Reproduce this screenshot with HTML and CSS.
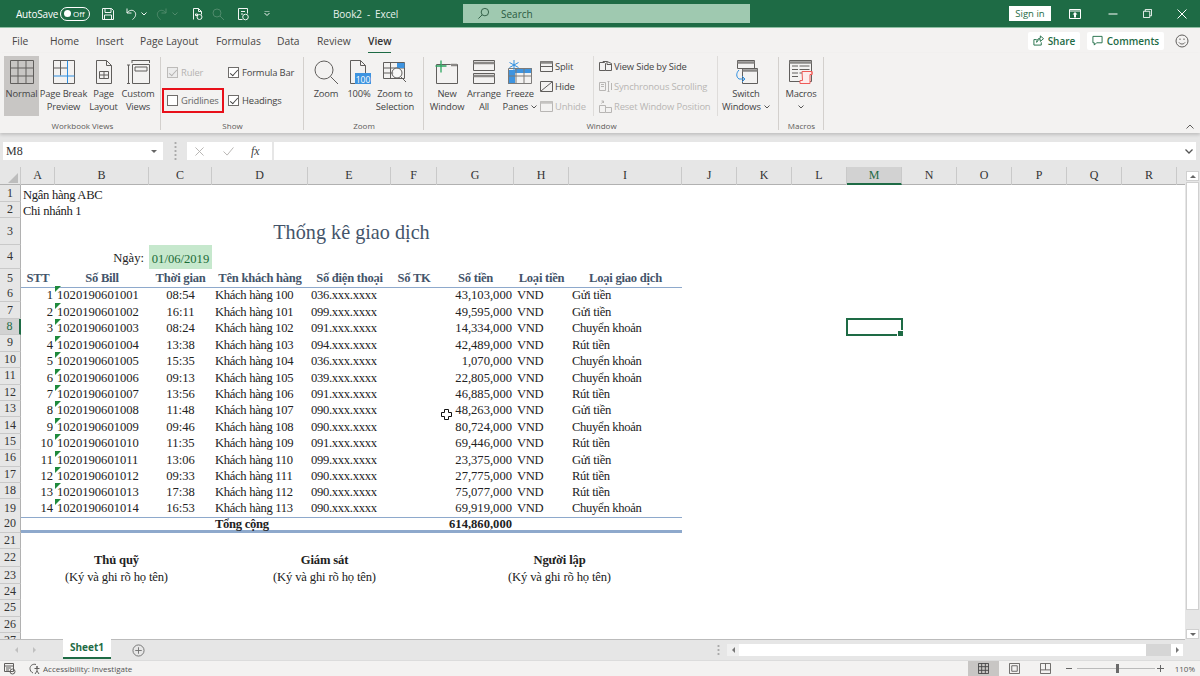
FILE: index.html
```html
<!DOCTYPE html>
<html lang="vi">
<head>
<meta charset="utf-8">
<title>Book2 - Excel</title>
<link rel="stylesheet" href="styles.css">
</head>
<body>
<div class="app">
  <header class="titlebar">
    <div class="qat">
      <span class="as-label">AutoSave</span>
      <span class="toggle"><i class="knob"></i><span class="off">Off</span></span>
      <svg class="q q-save" viewBox="0 0 14 14"><path d="M1.5 1.5h9l2 2v9h-11z M4 1.5v4h6v-4 M3.5 12.5v-4.5h7v4.5"/></svg>
      <svg class="q q-undo" viewBox="0 0 14 14"><path d="M3 1.5v4.5h4.5 M3 6c2-3 5.500-3.500 7.500-1.500s1.500 5.500-2 8"/></svg>
      <svg class="car" viewBox="0 0 6 4"><path d="M.5.5l2.500 2.500 2.500-2.500"/></svg>
      <svg class="q q-redo" viewBox="0 0 14 14"><path d="M11 1.500v4.500h-4.500 M11 6c-2-3-5.500-3.500-7.500-1.500s-1.500 5.500 2 8"/></svg>
      <svg class="car dim" viewBox="0 0 6 4"><path d="M.5.5l2.500 2.500 2.500-2.500"/></svg>
      <svg class="q q-print" viewBox="0 0 14 14"><path d="M2.500 12.500v-11h5l3 3v3 M7.500 1.500v3h3"/><circle cx="8.500" cy="10" r="2.500"/><path d="M4.500 7h2v1.500h-2z"/></svg>
      <svg class="q q-find" viewBox="0 0 14 14"><circle cx="6" cy="6" r="4"/><path d="M9 9l4 4"/></svg>
      <svg class="q q-form" viewBox="0 0 14 14"><path d="M2.500 1.500h9v5 M2.500 1.500v11h4 M5 4.500h4 M5 7h2"/><circle cx="9.500" cy="10" r="2.800"/></svg>
      <svg class="car q-more" viewBox="0 0 6 5"><path d="M.5 0h5 M.5 2l2.500 2.500 2.500-2.500"/></svg>
    </div>
    <div class="doc-title">Book2 &nbsp;- &nbsp;Excel</div>
    <div class="search">
      <svg class="s-ic" viewBox="0 0 14 14"><circle cx="8.500" cy="5.500" r="4"/><path d="M5.500 8.500l-4 4"/></svg>
      <span>Search</span>
    </div>
    <div class="winbtns">
      <span class="signin">Sign in</span>
      <svg class="w-disp" viewBox="0 0 12 10"><path d="M.5.500h11v9h-11z M.5 2h11" /><path class="solid" d="M6 3l2.500 2.500h-1.500v3h-2v-3h-1.500z"/></svg>
      <svg class="w-min" viewBox="0 0 10 10"><path d="M.5 5h9"/></svg>
      <svg class="w-max" viewBox="0 0 10 10"><path d="M.5 2.500h7v7h-7z M2.500 2.500v-2h7v7h-2"/></svg>
      <svg class="w-close" viewBox="0 0 10 10"><path d="M.5.500l9 9 M9.500.500l-9 9"/></svg>
    </div>
  </header>

  <nav class="tabs">
    <span class="tab">File</span><span class="tab">Home</span><span class="tab">Insert</span><span class="tab">Page Layout</span><span class="tab">Formulas</span><span class="tab">Data</span><span class="tab">Review</span><span class="tab active">View</span>
    <div class="tab-right">
      <span class="pill pill-share"><svg class="pill-ic" viewBox="0 0 12 12"><path d="M1 5h3 M1 5v6h8v-3 M4 8c0-3 2-4.500 4-4.500v-2.500l3.500 3-3.500 3v-2c-1.500 0-3 .5-4 3z"/></svg>Share</span>
      <span class="pill pill-comm"><svg class="pill-ic" viewBox="0 0 12 12"><path d="M1 1.500h10v7h-6l-2.500 2.500v-2.500h-1.500z"/></svg>Comments</span>
      <svg class="smile" viewBox="0 0 14 14"><circle cx="7" cy="7" r="6"/><path d="M4 8.500c1.500 2 4.500 2 6 0"/><path class="solid" d="M4.500 4.500h1v1.500h-1z M8.500 4.500h1v1.500h-1z"/></svg>
    </div>
  </nav>

  <section class="ribbon">
    <div class="group g-views">
      <div class="g-body">
        <div class="tb w-normal selected">
          <svg class="ic" viewBox="0 0 24 24"><path d="M.5.500h23v23h-23z M8 .5v23 M16 .5v23 M.5 8h23 M.5 16h23"/></svg>
          <span class="tl">Normal</span>
        </div>
        <div class="tb w-break">
          <svg class="ic" viewBox="0 0 24 24"><path d="M1.500.500h21v23h-21z M1.500 8h14 M8.500.5v15"/><path class="blue" d="M15.500.5v23 M1.500 16h21"/></svg>
          <span class="tl">Page Break<br>Preview</span>
        </div>
        <div class="tb w-layout">
          <svg class="ic" viewBox="0 0 24 24"><path d="M4.500.500h10l5 5v18h-15z M14.500.5v5h5 M7.500 11.500h9v7h-9z M7.500 15h9 M12 11.500v7"/></svg>
          <span class="tl">Page<br>Layout</span>
        </div>
        <div class="tb w-custom">
          <svg class="ic" viewBox="0 0 24 24"><path d="M6.500 4.500h17v19h-17z M9 7h12v4h-12z M6 .5h18 M6 0v3 M23.500 0v3 M1 5h3 M2.500 5v18 M1 23.500h3"/></svg>
          <span class="tl">Custom<br>Views</span>
        </div>
      </div>
      <div class="g-label">Workbook Views</div>
    </div>

    <div class="group g-show">
      <div class="g-body show-grid">
        <label class="chk dis"><span class="box on"></span>Ruler</label>
        <label class="chk"><span class="box on"></span>Formula Bar</label>
        <label class="chk outlined"><span class="box"></span>Gridlines</label>
        <label class="chk"><span class="box on"></span>Headings</label>
      </div>
      <div class="g-label">Show</div>
    </div>

    <div class="group g-zoom">
      <div class="g-body">
        <div class="tb w-zoom">
          <svg class="ic" viewBox="0 0 24 24"><circle cx="10" cy="10" r="9"/><path d="M16.500 16.500l7.500 7.500"/></svg>
          <span class="tl">Zoom</span>
        </div>
        <div class="tb w-100">
          <svg class="ic" viewBox="0 0 24 24"><path d="M3.500.500h10l5 5v18h-15z M13.500.5v5h5"/><path class="bluefill" d="M8 13h16v11h-16z"/><text class="t100" x="16" y="22.500">100</text></svg>
          <span class="tl">100%</span>
        </div>
        <div class="tb w-zsel">
          <svg class="ic" viewBox="0 0 24 24"><path d="M.5 2.500h21v16h-21z M.5 8h21 M.5 13h10 M7.500 2.500v16 M14.500 2.500v6"/><path class="bluefill" d="M14 3h7.500v5h-7.500z"/><circle class="lens" cx="14" cy="13" r="5"/><path d="M18 17l5 5"/></svg>
          <span class="tl">Zoom to<br>Selection</span>
        </div>
      </div>
      <div class="g-label">Zoom</div>
    </div>

    <div class="group g-window">
      <div class="g-body">
        <div class="tb w-new">
          <svg class="ic" viewBox="0 0 24 24"><path d="M6.500 4.500h-5v19h21v-19h-7z"/><path class="thick" d="M16 5h6"/><path class="green" d="M6 .5v12 M.5 6h11"/></svg>
          <span class="tl">New<br>Window</span>
        </div>
        <div class="tb w-arr">
          <svg class="ic" viewBox="0 0 24 24"><path d="M1.500.500h21v10h-21z M1.500 13.500h21v10h-21z"/><path class="thick" d="M1.500 3h21 M1.500 16h21"/></svg>
          <span class="tl">Arrange<br>All</span>
        </div>
        <div class="tb w-freeze">
          <svg class="ic" viewBox="0 0 24 24"><path class="bluefill" d="M0 10h7v14h-7z M7 8h17v5h-17z"/><path class="grid" d="M.5 8.500h23v15h-23z M.5 16h23 M8 8.500v15 M16 8.500v15"/><path class="blue" d="M6 0v10 M1.500 2.500l9 5 M10.500 2.500l-9 5"/></svg>
          <span class="tl">Freeze<br>Panes <svg class="car dark" viewBox="0 0 6 4"><path d="M.5.5l2.500 2.500 2.500-2.500"/></svg></span>
        </div>
        <div class="stack st-a">
          <div class="si"><svg class="sm" viewBox="0 0 13 13"><path d="M.5 1.500h12v10h-12z M.5 6.500h12"/><path class="thick" d="M.5 2.500h12"/></svg>Split</div>
          <div class="si"><svg class="sm" viewBox="0 0 13 13"><path d="M.5 1.500h12v10h-12z M1 11l11-9"/></svg>Hide</div>
          <div class="si dis"><svg class="sm" viewBox="0 0 13 13"><path d="M.5 1.500h12v10h-12z"/><path class="thick" d="M.5 2.500h12"/></svg>Unhide</div>
        </div>
        <div class="stack st-b">
          <div class="si"><svg class="sm" viewBox="0 0 13 13"><path d="M.5 2.500h5l1 1v7h-6z M4 2.500v-1h4l4.500 2v7h-6 M8 1.500v3h4.500"/></svg>View Side by Side</div>
          <div class="si dis"><svg class="sm" viewBox="0 0 13 13"><path d="M.5 2.500h6v8h-6z M2 4.500h3 M2 6.500h3 M8.500 1.500h2 M9.500 1.500v10 M8.500 11.500h2 M12.500 3v7"/></svg>Synchronous Scrolling</div>
          <div class="si dis"><svg class="sm" viewBox="0 0 13 13"><path d="M.5 5.500h6v7h-6z M6.500 7.500h6v5h-6 M2.500 3.500l2-2.500 M2.500 1h2v2"/></svg>Reset Window Position</div>
        </div>
        <div class="tb w-switch">
          <svg class="ic" viewBox="0 0 24 24"><path d="M3.500.500h17v8h-17z M8.500 8.500h15v15h-15z"/><path class="thick" d="M3.500 2.500h17 M8.500 10.500h15"/><path class="blue" d="M5 10c-3 3-3 7 0 9h6 M8 16l3 3-3 3"/></svg>
          <span class="tl">Switch<br>Windows <svg class="car dark" viewBox="0 0 6 4"><path d="M.5.5l2.500 2.500 2.500-2.500"/></svg></span>
        </div>
      </div>
      <div class="g-label">Window</div>
    </div>

    <div class="group g-macros">
      <div class="g-body">
        <div class="tb w-macros">
          <svg class="ic" viewBox="0 0 24 24"><path d="M.5.500h22v21h-22z M3 6h6 M3 9.500h6 M3 13h6 M3 16.500h6 M10.500 6h10 M10.500 9.500h10 M10.500 13h4"/><path class="thick" d="M.5 2.500h22"/><path class="red" d="M13 11.500h10v3h-2v9h-10v-3h2.500z M23 11.500v3"/></svg>
          <span class="tl">Macros<br><svg class="car dark" viewBox="0 0 6 4"><path d="M.5.5l2.500 2.500 2.500-2.500"/></svg></span>
        </div>
      </div>
      <div class="g-label">Macros</div>
    </div>

    <svg class="collapse" viewBox="0 0 8 5"><path d="M.5 4.500l3.500-3.500 3.500 3.500"/></svg>
  </section>

  <section class="formula">
    <div class="namebox"><span>M8</span><i class="tri-d"></i></div>
    <div class="f-dots"></div>
    <div class="f-btns">
      <svg class="f-x" viewBox="0 0 10 10"><path d="M.5.500l9 9 M9.500.500l-9 9"/></svg>
      <svg class="f-c" viewBox="0 0 12 10"><path d="M.5 5l4 4 7-8.500"/></svg>
      <span class="fx">fx</span>
    </div>
    <div class="f-input"><svg class="f-car" viewBox="0 0 8 5"><path d="M.5.500l3.500 3.500 3.500-3.500"/></svg></div>
  </section>

  <section class="workspace">
    <div class="sheet">
      <div class="colhead">
        <span class="corner"></span><span>A</span><span>B</span><span>C</span><span>D</span><span>E</span><span>F</span><span>G</span><span>H</span><span>I</span><span>J</span><span>K</span><span>L</span><span class="cur">M</span><span>N</span><span>O</span><span>P</span><span>Q</span><span>R</span>
      </div>

      <div class="r h17"><b class="rh">1</b><span class="c s-over">Ngân hàng ABC</span></div>
      <div class="r h16"><b class="rh">2</b><span class="c s-over">Chi nhánh 1</span></div>
      <div class="r h27"><b class="rh">3</b><span class="c title">Thống kê giao dịch</span></div>
      <div class="r h24"><b class="rh">4</b><span class="c s-ngay">Ngày:</span><span class="c date">01/06/2019</span></div>
      <div class="r h17 line"><b class="rh">5</b><span class="c th">STT</span><span class="c th">Số Bill</span><span class="c th">Thời gian</span><span class="c th">Tên khách hàng</span><span class="c th">Số điện thoại</span><span class="c th">Số TK</span><span class="c th">Số tiền</span><span class="c th">Loại tiền</span><span class="c th">Loại giao dịch</span></div>

      <div class="r"><b class="rh">6</b><span class="c n">1</span><span class="c bill">1020190601001</span><span class="c m">08:54</span><span class="c l">Khách hàng 100</span><span class="c l">036.xxx.xxxx</span><span class="c"></span><span class="c n">43,103,000</span><span class="c l">VND</span><span class="c l">Gửi tiền</span></div>
      <div class="r"><b class="rh">7</b><span class="c n">2</span><span class="c bill">1020190601002</span><span class="c m">16:11</span><span class="c l">Khách hàng 101</span><span class="c l">099.xxx.xxxx</span><span class="c"></span><span class="c n">49,595,000</span><span class="c l">VND</span><span class="c l">Gửi tiền</span></div>
      <div class="r"><b class="rh cur">8</b><span class="c n">3</span><span class="c bill">1020190601003</span><span class="c m">08:24</span><span class="c l">Khách hàng 102</span><span class="c l">091.xxx.xxxx</span><span class="c"></span><span class="c n">14,334,000</span><span class="c l">VND</span><span class="c l">Chuyển khoản</span></div>
      <div class="r"><b class="rh">9</b><span class="c n">4</span><span class="c bill">1020190601004</span><span class="c m">13:38</span><span class="c l">Khách hàng 103</span><span class="c l">094.xxx.xxxx</span><span class="c"></span><span class="c n">42,489,000</span><span class="c l">VND</span><span class="c l">Rút tiền</span></div>
      <div class="r"><b class="rh">10</b><span class="c n">5</span><span class="c bill">1020190601005</span><span class="c m">15:35</span><span class="c l">Khách hàng 104</span><span class="c l">036.xxx.xxxx</span><span class="c"></span><span class="c n">1,070,000</span><span class="c l">VND</span><span class="c l">Chuyển khoản</span></div>
      <div class="r"><b class="rh">11</b><span class="c n">6</span><span class="c bill">1020190601006</span><span class="c m">09:13</span><span class="c l">Khách hàng 105</span><span class="c l">039.xxx.xxxx</span><span class="c"></span><span class="c n">22,805,000</span><span class="c l">VND</span><span class="c l">Chuyển khoản</span></div>
      <div class="r"><b class="rh">12</b><span class="c n">7</span><span class="c bill">1020190601007</span><span class="c m">13:56</span><span class="c l">Khách hàng 106</span><span class="c l">091.xxx.xxxx</span><span class="c"></span><span class="c n">46,885,000</span><span class="c l">VND</span><span class="c l">Rút tiền</span></div>
      <div class="r"><b class="rh">13</b><span class="c n">8</span><span class="c bill">1020190601008</span><span class="c m">11:48</span><span class="c l">Khách hàng 107</span><span class="c l">090.xxx.xxxx</span><span class="c"></span><span class="c n">48,263,000</span><span class="c l">VND</span><span class="c l">Gửi tiền</span></div>
      <div class="r"><b class="rh">14</b><span class="c n">9</span><span class="c bill">1020190601009</span><span class="c m">09:46</span><span class="c l">Khách hàng 108</span><span class="c l">090.xxx.xxxx</span><span class="c"></span><span class="c n">80,724,000</span><span class="c l">VND</span><span class="c l">Chuyển khoản</span></div>
      <div class="r"><b class="rh">15</b><span class="c n">10</span><span class="c bill">1020190601010</span><span class="c m">11:35</span><span class="c l">Khách hàng 109</span><span class="c l">091.xxx.xxxx</span><span class="c"></span><span class="c n">69,446,000</span><span class="c l">VND</span><span class="c l">Rút tiền</span></div>
      <div class="r"><b class="rh">16</b><span class="c n">11</span><span class="c bill">1020190601011</span><span class="c m">13:06</span><span class="c l">Khách hàng 110</span><span class="c l">099.xxx.xxxx</span><span class="c"></span><span class="c n">23,375,000</span><span class="c l">VND</span><span class="c l">Gửi tiền</span></div>
      <div class="r"><b class="rh">17</b><span class="c n">12</span><span class="c bill">1020190601012</span><span class="c m">09:33</span><span class="c l">Khách hàng 111</span><span class="c l">090.xxx.xxxx</span><span class="c"></span><span class="c n">27,775,000</span><span class="c l">VND</span><span class="c l">Rút tiền</span></div>
      <div class="r"><b class="rh">18</b><span class="c n">13</span><span class="c bill">1020190601013</span><span class="c m">17:38</span><span class="c l">Khách hàng 112</span><span class="c l">090.xxx.xxxx</span><span class="c"></span><span class="c n">75,077,000</span><span class="c l">VND</span><span class="c l">Rút tiền</span></div>
      <div class="r line"><b class="rh">19</b><span class="c n">14</span><span class="c bill">1020190601014</span><span class="c m">16:53</span><span class="c l">Khách hàng 113</span><span class="c l">090.xxx.xxxx</span><span class="c"></span><span class="c n">69,919,000</span><span class="c l">VND</span><span class="c l">Chuyển khoản</span></div>

      <div class="r h17 total"><b class="rh">20</b><span class="c"></span><span class="c"></span><span class="c"></span><span class="c l strong">Tổng cộng</span><span class="c"></span><span class="c"></span><span class="c n strong">614,860,000</span><span class="c"></span><span class="c"></span></div>
      <div class="r"><b class="rh">21</b></div>
      <div class="r sig22"><b class="rh">22</b><span class="c sig-a strong">Thủ quỹ</span><span class="c sig-b strong">Giám sát</span><span class="c sig-c strong">Người lập</span></div>
      <div class="r"><b class="rh">23</b><span class="c sig-a">(Ký và ghi rõ họ tên)</span><span class="c sig-b">(Ký và ghi rõ họ tên)</span><span class="c sig-c">(Ký và ghi rõ họ tên)</span></div>
      <div class="r"><b class="rh">24</b></div>
      <div class="r"><b class="rh">25</b></div>
      <div class="r"><b class="rh">26</b></div>
      <div class="r"><b class="rh">27</b></div>

      <div class="selection"></div>
      <svg class="cursor" viewBox="0 0 11 11"><path d="M3.500.500h4v3h3v4h-3v3h-4v-3h-3v-4h3z"/></svg>
    </div>
    <div class="vscroll">
      <span class="sb-btn"><i class="tri-u"></i></span>
      <span class="sb-thumb"></span>
      <span class="sb-btn"><i class="tri-d"></i></span>
    </div>
  </section>

  <section class="sheetbar">
    <i class="nav nav-l"></i><i class="nav nav-r"></i>
    <span class="sheet-tab">Sheet1</span>
    <svg class="add" viewBox="0 0 14 14"><circle cx="7" cy="7" r="6"/><path d="M7 3.500v7 M3.500 7h7"/></svg>
    <div class="hdots"></div>
    <div class="hscroll">
      <span class="hs-btn"><i class="tri-l"></i></span>
      <span class="hs-thumb"></span>
      <span class="hs-btn"><i class="tri-r"></i></span>
    </div>
  </section>

  <footer class="status">
    <svg class="st-macro" viewBox="0 0 12 12"><path d="M.5.500h9v8h-9z M.5 3h9 M2 5h5 M2 7h3"/><circle cx="8.500" cy="8.500" r="2.500"/></svg>
    <svg class="st-acc" viewBox="0 0 12 12"><path d="M7 1.500c-3-1-6 1-6 4 0 2 1 3.500 3 4.500"/><circle class="solid" cx="8" cy="4" r="1"/><path d="M5.500 5.500h5 M8 5.500v2.500l-2 3 M8 8l2 3"/></svg>
    <span class="st-text">Accessibility: Investigate</span>
    <div class="st-right">
      <span class="vw vw-on"><svg viewBox="0 0 12 12"><path d="M.5.500h11v11h-11z M4 .5v11 M8 .5v11 M.5 4h11 M.5 8h11"/></svg></span>
      <span class="vw"><svg viewBox="0 0 12 12"><path d="M.5.500h11v11h-11z M3 3h6v6h-6z"/></svg></span>
      <span class="vw"><svg viewBox="0 0 12 12"><path d="M.5.500h11v11h-11z M.5 7.500h11 M6 .5v7"/></svg></span>
      <span class="z-minus"></span>
      <span class="slider"><i class="z-thumb"></i></span>
      <span class="z-plus"></span>
      <span class="z-val">110%</span>
    </div>
  </footer>
</div>
</body>
</html>
```

FILE: styles.css
```css
* { box-sizing: border-box; }
html, body { margin: 0; padding: 0; }
body { width: 1200px; height: 676px; overflow: hidden; background: #e6e6e6; font-family: "Open Sans", "Noto Sans", sans-serif; color: #444; }
svg { display: block; fill: none; stroke: #605e5c; stroke-width: 1; flex: none; }
svg .solid { fill: currentColor; stroke: none; }
.app { display: flex; flex-direction: column; width: 1200px; height: 676px; }

/* title bar */
.titlebar { height: 28px; flex: none; display: flex; align-items: center; background: #1e6b45; color: #fff; font-size: 10px; border-bottom: 1px solid #8fbfa3; }
.qat { width: 333px; flex: none; display: flex; align-items: center; padding-left: 16px; }
.qat svg { stroke: #f0f5f2; }
.as-label { width: 44px; font-size: 10px; white-space: nowrap; letter-spacing: -.2px; }
.toggle { width: 30px; height: 14px; border: 1px solid #fff; border-radius: 7px; display: flex; align-items: center; padding-left: 3px; gap: 2px; font-size: 8px; }
.knob { width: 7px; height: 7px; border-radius: 50%; background: #fff; }
.off { font-size: 8px; line-height: 1; }
.q { width: 14px; height: 14px; }
.q-save { margin-left: 11px; }
.q-undo { margin-left: 9px; }
.car { width: 6px; height: 4px; margin-left: 3px; display: inline-block; }
.car.dim, .qat .car.dim { stroke: #4f8a6b; }
.q-redo { margin-left: 8px; }
.qat .q-redo, .qat .q-find { stroke: #4f8a6b; }
.q-print { margin-left: 13px; }
.q-find { margin-left: 6px; }
.q-form { margin-left: 11px; }
.q-more { margin-left: 14px; height: 5px; }
.doc-title { width: 130px; flex: none; font-size: 10px; color: #e8f1ec; white-space: nowrap; letter-spacing: -.1px; }
.search { width: 287px; height: 19px; flex: none; background: #9fc9b0; color: #2b5a41; display: flex; align-items: center; padding-left: 14px; gap: 11px; font-size: 10px; }
.s-ic { width: 13px; height: 13px; stroke: #2b5a41; }
.winbtns { flex: 1; display: flex; align-items: center; padding-left: 259px; }
.signin { width: 42px; height: 15px; background: #fff; color: #1e6b45; font-size: 9.500px; line-height: 15px; text-align: center; white-space: nowrap; }
.winbtns svg { stroke: #fff; }
.w-disp { width: 12px; height: 10px; margin-left: 18px; color: #fff; }
.w-min { width: 10px; height: 10px; margin-left: 27px; }
.w-max { width: 9px; height: 9px; margin-left: 25px; }
.w-close { width: 10px; height: 10px; margin-left: 25px; }

/* tabs */
.tabs { height: 25px; flex: none; display: grid; grid-template-columns: 12px 38px 46px 44px 76px 61px 40px 51px 51px 1fr; background: #f3f2f1; font-size: 10.300px; align-items: center; }
.tab { white-space: nowrap; color: #484644; }
.tab:first-child { grid-column: 2; }
.active { grid-column: 9; position: relative; font-weight: 600; color: #333; }
.active::after { content: ""; position: absolute; left: 0; width: 23px; bottom: -6px; height: 2px; background: #1e6b45; }
.tab-right { grid-column: 10; grid-row: 1; display: flex; align-items: center; gap: 7px; justify-content: flex-end; padding-right: 11px; }
.pill { height: 18px; background: #fff; color: #1e6b45; font-weight: 600; font-size: 10px; display: flex; align-items: center; justify-content: center; gap: 4px; white-space: nowrap; border-radius: 2px; }
.pill-share { width: 52px; }
.pill-comm { width: 77px; }
.pill-ic { width: 11px; height: 11px; stroke: #1e6b45; }
.smile { width: 14px; height: 14px; margin-left: 4px; color: #605e5c; }

/* ribbon */
.ribbon { height: 80px; flex: none; display: flex; position: relative; background: #f3f2f1; padding-top: 3px; box-shadow: 0 2px 3px rgba(0,0,0,.16); z-index: 2; }
.group { display: flex; flex-direction: column; height: 77px; position: relative; }
.group::after { content: ""; position: absolute; right: 0; top: 1px; bottom: 3px; width: 1px; background: #d3d0cd; }
.g-body { height: 63px; display: flex; flex: none; }
.g-label { height: 14px; flex: none; line-height: 14px; text-align: center; font-size: 8px; color: #5c5a58; white-space: nowrap; }
.g-views { width: 161px; padding-left: 4px; }
.g-show { width: 143px; }
.g-zoom { width: 120px; }
.g-window { width: 355px; }
.g-macros { width: 45px; }
.tb { display: flex; flex-direction: column; align-items: center; height: 60px; padding-top: 4px; flex: none; }
.tb .ic { width: 24px; height: 24px; }
.tl { display: block; margin-top: 3px; font-size: 9.400px; line-height: 13px; text-align: center; white-space: nowrap; color: #444; letter-spacing: -.15px; }
.selected { background: #c8c6c4; }
.w-normal { width: 35px; }
.w-break { width: 49px; }
.w-layout { width: 31px; margin-left: 0; }
.w-custom { width: 36px; margin-left: 1px; }
.w-zoom { width: 34px; margin-left: 5px; }
.w-100 { width: 32px; }
.w-zsel { width: 40px; }
.w-new { width: 40px; margin-left: 3px; }
.w-arr { width: 34px; }
.w-freeze { width: 38px; }
.w-switch { width: 50px; margin-left: 3px; }
.w-macros { width: 44px; }
.car.dark { stroke: #555; margin-left: 1px; vertical-align: 1px; }
.blue { stroke: #2f8fe0; }
.bluefill { fill: #3e94e0; stroke: none; }
.green { stroke: #2ba560; stroke-width: 1.300; }
.red { stroke: #ee5a57; fill: #fdecec; }
.grid { stroke: #7d7b79; }
.thick { stroke: #8a8886; stroke-width: 2.500; }
.lens { fill: rgba(255,255,255,.6); }
.t100 { font-family: "Open Sans", sans-serif; font-size: 8.500px; fill: #fff; stroke: none; text-anchor: middle; }

.show-grid { display: grid; grid-template-columns: 64px 1fr; grid-template-rows: 28px 24px; padding: 5px 0 0 2px; align-content: start; }
.chk { display: flex; align-items: center; gap: 3px; font-size: 9.400px; white-space: nowrap; height: 23px; padding-left: 4px; color: #444; letter-spacing: -.15px; }
.box { width: 11px; height: 11px; border: 1px solid #6f6d6b; background: #fff; position: relative; flex: none; }
.box.on::after { content: ""; position: absolute; left: 3px; top: 0; width: 3px; height: 7px; border: solid #444; border-width: 0 1px 1px 0; transform: rotate(42deg); }
.chk.dis { color: #b5b3b1; }
.chk.dis .box { border-color: #bdbbb9; background: #ececec; }
.chk.dis .box.on::after { border-color: #b5b3b1; }
.outlined { outline: 2px solid #e8101a; outline-offset: -1px; width: 60px; color: #666; }
.show-grid .chk:nth-child(2) { padding-left: 1px; }
.show-grid .chk:nth-child(4) { padding-left: 1px; }

.stack { display: flex; flex-direction: column; padding-top: 1px; flex: none; }
.si { height: 20px; display: flex; align-items: center; gap: 2px; font-size: 9.400px; white-space: nowrap; color: #444; letter-spacing: -.15px; }
.sm { width: 13px; height: 13px; }
.si.dis { color: #b8b6b4; }
.si.dis svg { stroke: #b8b6b4; }
.si.dis .thick { stroke: #c5c3c1; }
.st-a { width: 54px; margin-left: 1px; border-right: 1px solid #dedcda; height: 60px; }
.st-b { width: 124px; padding-left: 5px; border-right: 1px solid #dedcda; height: 60px; }
.collapse { position: absolute; right: 6px; bottom: 4px; width: 8px; height: 5px; stroke: #605e5c; }

/* formula */
.formula { height: 34px; flex: none; display: flex; align-items: flex-end; padding: 0 4px 7px 3px; background: #e6e6e6; font-family: "Liberation Serif", serif; }
.namebox { width: 160px; height: 18px; background: #fff; display: flex; align-items: center; justify-content: space-between; padding: 0 6px 0 3px; font-size: 12px; color: #333; }
.tri-d { width: 0; height: 0; border: 3px solid transparent; border-top: 3px solid #666; border-bottom-width: 0; }
.f-dots { width: 24px; height: 18px; flex: none; background: radial-gradient(circle, #aaa 1px, transparent 1.200px) center / 3px 4px repeat-y; }
.f-btns { width: 85px; height: 18px; background: #fff; display: flex; align-items: center; padding-left: 8px; flex: none; }
.f-x { width: 9px; height: 9px; stroke: #b1afad; }
.f-c { width: 11px; height: 9px; stroke: #b1afad; margin-left: 19px; }
.fx { margin-left: 17px; font-style: italic; font-size: 12px; color: #444; }
.f-input { flex: 1; height: 18px; margin-left: 2px; background: #fff; position: relative; display: flex; align-items: center; justify-content: flex-end; padding-right: 3px; }
.f-car { width: 8px; height: 5px; stroke: #555; stroke-width: 1.300; }

/* sheet */
.workspace { height: 473px; flex: none; display: flex; background: #fff; }
.sheet { width: 1185px; position: relative; overflow: hidden; background: #fff; font-family: "Liberation Serif", serif; font-size: 12.600px; color: #222; border-bottom: 1px solid #bbb; }
.colhead { display: grid; grid-template-columns: 21px 34px 94px 63px 96px 83px 46px 77px 55px 113px repeat(9, 55px); height: 18px; background: #e6e6e6; border-bottom: 1px solid #b1b1b1; }
.colhead span { display: block; text-align: center; line-height: 17px; font-size: 12px; color: #333; border-right: 1px solid #c9c9c9; }
.colhead .corner { position: relative; }
.corner::after { content: ""; position: absolute; right: 2px; bottom: 2px; border: 5px solid transparent; border-right-color: #bdbdbd; border-bottom-color: #bdbdbd; }
.colhead .cur { background: #d2d2d2; color: #1e6b45; border-bottom: 2px solid #1e6b45; height: 18px; }

.r { display: grid; grid-template-columns: 21px 34px 94px 63px 96px 83px 46px 77px 55px 113px; width: 682px; height: 16.430px; }
.h17 { height: 17px; }
.h16 { height: 16px; }
.h27 { height: 27px; }
.h24 { height: 24px; }
.sig22 { height: 18px; }
.rh { font-weight: 400; display: flex; align-items: center; justify-content: center; background: #e6e6e6; border-bottom: 1px solid #c9c9c9; border-right: 1px solid #b1b1b1; font-size: 12px; color: #333; height: 100%; }
.rh.cur { background: #d2d2d2; color: #1e6b45; border-right: 2px solid #1e6b45; }
.c { display: block; white-space: nowrap; align-self: end; line-height: 18px; height: 16px; min-width: 0; }
.s-over { padding-left: 2px; grid-column: 2 / 5; letter-spacing: -.3px; }
.title { grid-column: 2 / 11; text-align: center; font-size: 20.200px; color: #44546a; line-height: 29px; height: 27px; align-self: start; }
.s-ngay { grid-column: 2 / 4; text-align: right; padding-right: 5px; line-height: 26px; height: 24px; }
.date { background: #c6e8cd; color: #1a6b37; text-align: center; height: 24px; line-height: 28px; }
.th { font-weight: 700; color: #44546a; text-align: center; height: 17px; letter-spacing: -.25px; }
.line .c { border-bottom: 1px solid #8ea9cc; height: 100%; }
.n { text-align: right; padding-right: 2px; }
.l { padding-left: 3px; letter-spacing: -.3px; }
.m { text-align: center; }
.bill { padding-left: 2px; position: relative; }
.bill::before { content: ""; position: absolute; left: 0; top: 0; border: 3px solid transparent; border-left-color: #1f8a3c; border-top-color: #1f8a3c; }
.strong { font-weight: 700; color: #222; }
.total .c { border-bottom: 3px solid #8ea9cc; height: 17px; line-height: 16px; }
.sig-a { grid-column: 2 / 5; text-align: center; letter-spacing: -.15px; }
.sig-b { grid-column: 5 / 8; text-align: center; letter-spacing: -.15px; }
.sig-c { grid-column: 8 / 11; text-align: center; letter-spacing: -.15px; }
.selection { position: absolute; left: 846px; top: 151px; width: 57px; height: 18px; border: 2px solid #1e6b45; box-shadow: inset 0 0 0 .5px #fff; }
.selection::after { content: ""; position: absolute; right: -3px; bottom: -3px; width: 5px; height: 5px; background: #1e6b45; border: 1px solid #fff; }
.cursor { position: absolute; left: 441px; top: 242px; width: 11px; height: 11px; stroke: #111; fill: #fff; }

.vscroll { width: 15px; background: #e6e6e6; display: flex; flex-direction: column; gap: 1px; padding: 4px 1px 0 1px; }
.sb-btn { height: 10px; width: 13px; flex: none; background: #fff; display: flex; align-items: center; justify-content: center; border: 1px solid #d0d0d0; }
.sb-thumb { height: 428px; width: 13px; flex: none; background: #fff; border: 1px solid #d0d0d0; margin-bottom: 18px; }
.tri-u { width: 0; height: 0; border: 3px solid transparent; border-bottom: 3px solid #666; border-top-width: 0; }

/* sheet tabs */
.sheetbar { height: 20px; flex: none; display: flex; align-items: center; background: #e6e6e6; position: relative; }
.nav { width: 0; height: 0; border: 3px solid transparent; border-left-width: 0; border-right-color: #c0c0c0; margin-left: 15px; }
.nav-r { border-right-width: 0; border-left: 3px solid #c0c0c0; margin-left: 15px; }
.sheet-tab { width: 48px; height: 20px; margin-left: 27px; background: #fff; color: #1e6b45; font-weight: 700; font-size: 10px; text-align: center; line-height: 17px; border-bottom: 2px solid #1e6b45; margin-top: -2px; }
.add { width: 13px; height: 13px; margin-left: 21px; stroke: #707070; }
.hdots { width: 3px; height: 14px; margin-left: 572px; background: radial-gradient(circle, #aaa 1px, transparent 1.200px) center / 3px 4px repeat-y; }
.hscroll { margin-left: 7px; width: 456px; height: 12px; display: flex; background: #d6d6d6; }
.hs-btn { width: 12px; height: 12px; background: #f0f0f0; display: flex; align-items: center; justify-content: center; flex: none; }
.hs-thumb { width: 407px; background: #fff; margin-right: 25px; flex: none; }
.tri-l { border: 3px solid transparent; border-left-width: 0; border-right: 3px solid #777; width: 0; height: 0; }
.tri-r { border: 3px solid transparent; border-right-width: 0; border-left: 3px solid #777; width: 0; height: 0; }
.hs-btn:last-child { background: #fff; }

/* status */
.status { height: 16px; flex: none; display: flex; align-items: center; background: #f3f2f1; font-size: 8px; color: #555; border-top: 1px solid #dcdcdc; }
.st-macro { width: 12px; height: 12px; margin-left: 4px; }
.st-acc { width: 12px; height: 12px; margin-left: 13px; color: #605e5c; }
.st-text { margin-left: 2px; white-space: nowrap; }
.st-right { margin-left: auto; display: flex; align-items: center; height: 16px; }
.vw { width: 31px; height: 16px; display: flex; align-items: center; justify-content: center; }
.vw svg { width: 11px; height: 11px; }
.vw-on { background: #c8c6c4; }
.vw-on svg { stroke: #444; }
.z-minus { width: 6px; height: 1px; background: #666; margin-left: 5px; }
.slider { width: 78px; height: 1px; background: #bbb; margin-left: 5px; position: relative; }
.z-thumb { position: absolute; left: 39px; top: -4px; width: 3px; height: 9px; background: #6a6a6a; }
.z-plus { width: 7px; height: 7px; margin-left: 2px; background: linear-gradient(#666, #666) center / 7px 1px no-repeat, linear-gradient(#666, #666) center / 1px 7px no-repeat; }
.z-val { width: 36px; text-align: right; padding-right: 5px; }
```
